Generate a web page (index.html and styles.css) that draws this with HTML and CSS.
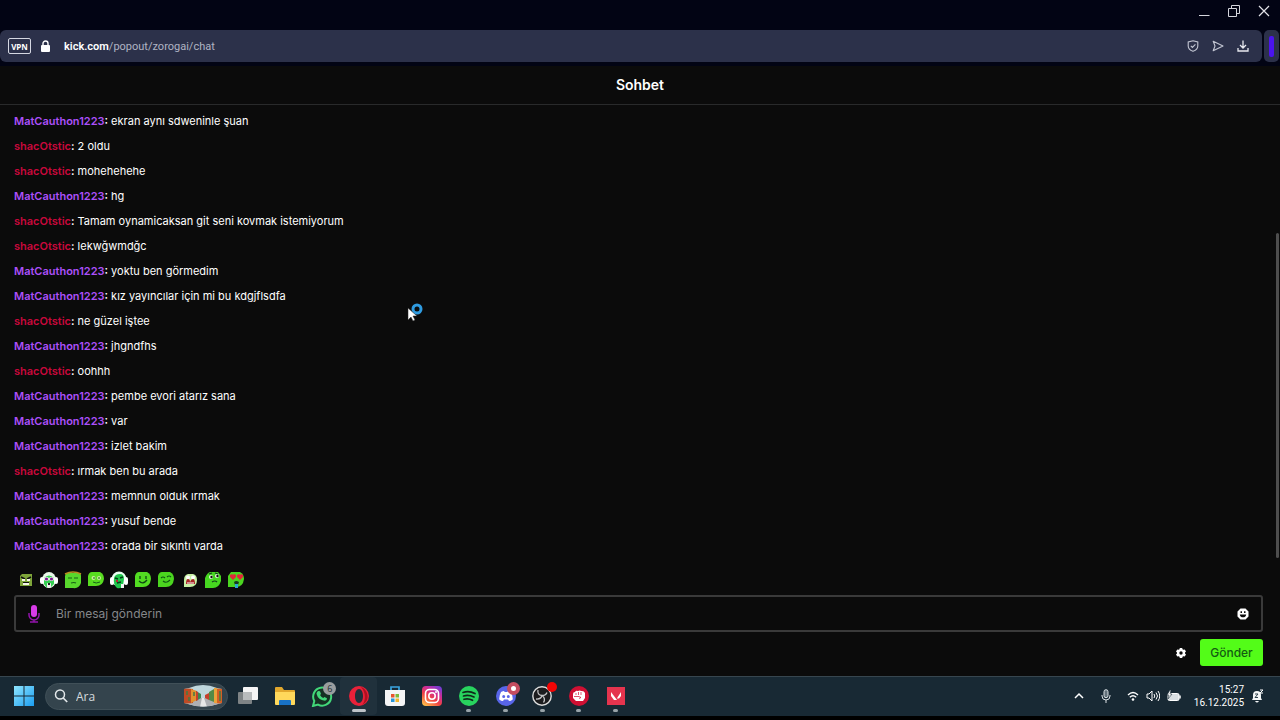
FILE: index.html
```html
<!DOCTYPE html>
<html lang="tr">
<head>
    <meta charset="UTF-8">
    <meta name="viewport" content="width=device-width, initial-scale=1.0">
    <title>Sohbet</title>
    <link rel="stylesheet" href="styles.css">
</head>
<body>
    <header class="browser">
        <div class="titlebar">
            <button class="win-btn" aria-label="Simge durumuna küçült"><svg width="12" height="12" viewBox="0 0 12 12"><path d="M1 10.500h10.500" stroke="#d5d6dd" fill="none"/></svg></button>
            <button class="win-btn" aria-label="Önceki boyut"><svg width="12" height="12" viewBox="0 0 12 12"><path d="M.5 3.500h8v8h-8zM3.500 3.500v-3h8v8h-3" stroke="#d5d6dd" fill="none"/></svg></button>
            <button class="win-btn" aria-label="Kapat"><svg width="12" height="12" viewBox="0 0 12 12"><path d="M1 1l10 10M11 1L1 11" stroke="#e2e3e8" stroke-width="1.200" fill="none"/></svg></button>
        </div>
        <div class="address-row">
            <div class="address-bar">
                <button class="vpn">VPN</button>
                <svg class="lock" width="9" height="12" viewBox="0 0 9 12"><path d="M2 6V3.500a2.500 2.500 0 0 1 5 0V6" stroke="#fff" stroke-width="1.400" fill="none"/><rect y="5" width="9" height="7" rx="1" fill="#fff"/></svg>
                <p class="url"><strong>kick.com</strong>/popout/zorogai/chat</p>
                <div class="address-tools">
                    <button aria-label="Koruma"><svg width="12" height="12" viewBox="0 0 12 12"><path d="M6 .8L10.800 2v4c0 2.500-2 4.300-4.800 5.300C3.200 10.300 1.200 8.500 1.200 6V2zM3.800 5.800l1.600 1.600 3-3" stroke="#c3c6d3" stroke-width="1.100" fill="none"/></svg></button>
                    <button aria-label="Gönder"><svg width="12" height="12" viewBox="0 0 12 12"><path d="M1.200 1.200L11 6l-9.800 4.800L3 6z" stroke="#c3c6d3" stroke-width="1.100" stroke-linejoin="round" fill="none"/></svg></button>
                    <button aria-label="İndirilenler"><svg width="12" height="12" viewBox="0 0 12 12"><path d="M6 .5v7M3 5l3 3 3-3M1 8v3h10V8" stroke="#e7e8ee" stroke-width="1.300" fill="none"/></svg></button>
                </div>
            </div>
            <div class="side-tab"><span></span></div>
        </div>
    </header>

    <main class="chat">
        <h1>Sohbet</h1>
        <section class="messages">
            <ul>
                <li><b class="purple">MatCauthon1223</b><b>:</b> ekran aynı sdweninle şuan</li>
                <li><b class="red">shacOtstic</b><b>:</b> 2 oldu</li>
                <li><b class="red">shacOtstic</b><b>:</b> mohehehehe</li>
                <li><b class="purple">MatCauthon1223</b><b>:</b> hg</li>
                <li><b class="red">shacOtstic</b><b>:</b> Tamam oynamicaksan git seni kovmak istemiyorum</li>
                <li><b class="red">shacOtstic</b><b>:</b> lekwğwmdğc</li>
                <li><b class="purple">MatCauthon1223</b><b>:</b> yoktu ben görmedim</li>
                <li><b class="purple">MatCauthon1223</b><b>:</b> kız yayıncılar için mi bu kdgjflsdfa</li>
                <li><b class="red">shacOtstic</b><b>:</b> ne güzel iştee</li>
                <li><b class="purple">MatCauthon1223</b><b>:</b> jhgndfhs</li>
                <li><b class="red">shacOtstic</b><b>:</b> oohhh</li>
                <li><b class="purple">MatCauthon1223</b><b>:</b> pembe evori atarız sana</li>
                <li><b class="purple">MatCauthon1223</b><b>:</b> var</li>
                <li><b class="purple">MatCauthon1223</b><b>:</b> izlet bakim</li>
                <li><b class="red">shacOtstic</b><b>:</b> ırmak ben bu arada</li>
                <li><b class="purple">MatCauthon1223</b><b>:</b> memnun olduk ırmak</li>
                <li><b class="purple">MatCauthon1223</b><b>:</b> yusuf bende</li>
                <li><b class="purple">MatCauthon1223</b><b>:</b> orada bir sıkıntı varda</li>
            </ul>
            <span class="scroll-thumb"></span>
        </section>

        <div class="emotes">
            <button aria-label="Kızgın"><svg viewBox="0 0 18 18"><path d="M5 3h10v12H3V5z" fill="#7fa63a"/><path d="M4 6l4 2M14 6l-4 2" stroke="#111" stroke-width="1.500"/><path d="M5 8h3v2H5zM10 8h3v2h-3zM6 12h6v2H6z" fill="#f5f5e8"/><path d="M6 11.500h6" stroke="#111"/></svg></button>
            <button aria-label="Kulaklıklı"><svg viewBox="0 0 18 18"><ellipse cx="9" cy="9" rx="7" ry="8" fill="#e9f8e9"/><rect y="6" width="4" height="7" rx="2" fill="#fff"/><rect x="14" y="6" width="4" height="7" rx="2" fill="#fff"/><path d="M4 7q5-5 10 0v6l-4 4H7l-3-4z" fill="#35cf52"/><ellipse cx="6.500" cy="8" rx="2.500" ry="2" fill="#fff"/><ellipse cx="11.500" cy="8" rx="2.500" ry="2" fill="#fff"/><circle cx="6.500" cy="8" r="1.600" fill="#7b188e"/><circle cx="11.500" cy="8" r="1.600" fill="#7b188e"/><rect x="7" y="12" width="4" height="5" rx="1" fill="#f0f0f0"/><path d="M8 12h2v2H8z" fill="#222"/></svg></button>
            <button aria-label="Uykulu"><svg viewBox="0 0 18 18"><path d="M2 2h13q2 0 2 3v7q-2 6-8 5H1V5z" fill="#58d82c"/><path d="M1 3q8-4 16 0" stroke="#b98b21" stroke-width="1.500" fill="none"/><path d="M4 7h4M10 7h4M7 12q3-1 5 0" stroke="#165f18" stroke-width="1.200" fill="none"/></svg></button>
            <button aria-label="Şaşkın"><svg viewBox="0 0 18 18"><path d="M5 1h8q4 2 4 7-1 7-8 7H1V5q1-4 4-4z" fill="#58dc20"/><circle cx="6.500" cy="7" r="2" fill="#c9f09a"/><circle cx="12" cy="7" r="2" fill="#c9f09a"/><path d="M6 7h2M11 7h2M6 11q3 2 7 0" stroke="#14601b" fill="none"/></svg></button>
            <button aria-label="Müzik"><svg viewBox="0 0 18 18"><circle cx="9" cy="8" r="7.500" fill="#e9fff0"/><rect y="6" width="4" height="8" rx="2" fill="#fff"/><rect x="14" y="6" width="4" height="8" rx="2" fill="#fff"/><path d="M4 7q1-4 6-4 4 0 4 5l-1 6q-1 4-6 3-4-3-3-10z" fill="#1fc64c"/><path d="M5 7l3 1M10 7l3-1M7 12l4-1" stroke="#083b19" stroke-width="1.400"/><path d="M6 9h2v2H6z" fill="#b52632"/><path d="M11 13h3v4h-3z" fill="#f2f2f2"/></svg></button>
            <button aria-label="Gülen"><svg viewBox="0 0 18 18"><path d="M5 1h8q4 2 4 7-1 8-8 8H1V5q1-4 4-4z" fill="#53dc22"/><path d="M6 5v3M12 5v3M5 10q4 4 8-1" stroke="#0d4714" stroke-width="1.300" fill="none"/></svg></button>
            <button aria-label="Mutlu"><svg viewBox="0 0 18 18"><path d="M5 1h8q4 2 4 7-1 8-8 8H1V5q1-4 4-4z" fill="#4bd51f"/><path d="M4 7q2-2 4 0M10 6q2-2 4 0M6 10q3 3 7-1" stroke="#0d5314" stroke-width="1.100" fill="none"/></svg></button>
            <button aria-label="Bağıran"><svg viewBox="0 0 18 18"><path d="M7 3h5q4 1 4 6 0 7-7 7H3V9q0-5 4-6z" fill="#c8f0a5"/><circle cx="7" cy="6.500" r="2" fill="#fff"/><circle cx="12" cy="6.500" r="2" fill="#fff"/><path d="M5 13q0-5 2-5t2 3q1-3 3-3t2 5z" fill="#a82424"/><path d="M6 12h7" stroke="#fff"/></svg></button>
            <button aria-label="Düşünen"><svg viewBox="0 0 18 18"><path d="M6 1h8l3 4v5q-2 7-8 7H1V7q2-5 5-6z" fill="#46d720"/><circle cx="7" cy="6" r="2" fill="#e8f9de"/><circle cx="13" cy="5" r="2" fill="#e8f9de"/><circle cx="7.500" cy="6" r="1.200" fill="#111"/><circle cx="13.500" cy="5" r="1.200" fill="#111"/><path d="M5 3l3-1M11 2l3 1M8 11q3-2 5 0" stroke="#11401b" stroke-width="1.200" fill="none"/></svg></button>
            <button aria-label="Aşık"><svg viewBox="0 0 18 18"><path d="M4 1h9q4 2 4 7-1 8-8 8H1V5z" fill="#4bd620"/><path d="M6 9L3 6V4l2-1 1 1 1-1 2 1v2zM13 9l-3-3V4l2-1 1 1 1-1 2 1v2z" fill="#e12738"/><path d="M7 11q2-2 5 0l-1 3H8z" fill="#173b22"/><path d="M8 13h3v4H8z" fill="#29a9d2"/></svg></button>
        </div>

        <form class="composer">
            <div class="message-box">
                <svg class="mic" width="12" height="18" viewBox="0 0 12 18"><rect x="3" y="0" width="6" height="12" rx="3" fill="#d83be8"/><path d="M1 8v2a5 5 0 0 0 10 0V8M6 15v2M2 17h8" stroke="#9415ad" stroke-width="1.500" fill="none"/></svg>
                <input type="text" placeholder="Bir mesaj gönderin" aria-label="Bir mesaj gönderin">
                <button type="button" aria-label="İfadeler"><svg width="12" height="12" viewBox="0 0 12 12"><path fill="#fff" fill-rule="evenodd" d="M3.500.5h5l3 3v5l-3 3h-5l-3-3v-5zM3.500 3.300V5H5V3.300zM7 3.300V5h1.500V3.300zM2.800 6.500c.3 3.800 6.100 3.800 6.400 0z"/></svg></button>
            </div>
            <div class="actions">
                <button class="settings" type="button" aria-label="Ayarlar"><svg width="10" height="10" viewBox="0 0 10 10"><path fill="#fff" fill-rule="evenodd" d="M3.800 0h2.400l.3 1.300.9.500L8.700 1.400 10 3.500 9 4.500v1l1 1-1.300 2.100-1.300-.4-.9.500L6.200 10H3.800l-.3-1.300-.9-.5-1.300.4L0 6.500l1-1v-1l-1-1 1.300-2.100 1.300.4.9-.5zM5 3.300a1.700 1.700 0 1 0 0 3.400 1.700 1.700 0 0 0 0-3.400z"/></svg></button>
                <button class="send" type="button">Gönder</button>
            </div>
        </form>
        <svg class="cursor" width="18" height="20" viewBox="0 0 18 20"><circle cx="10" cy="6" r="4" fill="none" stroke="#2f9be0" stroke-width="3"/><path d="M1 5v12l3-3 2 4 2-1-2-4h4z" fill="#fff" stroke="#222" stroke-width=".5"/></svg>
    </main>

    <footer class="taskbar">
        <button class="start" aria-label="Başlat"><svg width="20" height="20" viewBox="0 0 20 20"><defs><linearGradient id="win" x2="1" y2="1"><stop stop-color="#8fe6ff"/><stop offset="1" stop-color="#1b9df0"/></linearGradient></defs><path fill="url(#win)" d="M0 0h9.500v9.500H0zM10.500 0H20v9.500h-9.500zM0 10.500h9.500V20H0zM10.500 10.500H20V20h-9.500z"/></svg></button>
        <div class="search">
            <svg width="14" height="14" viewBox="0 0 14 14"><circle cx="6" cy="5.500" r="4.500" fill="none" stroke="#e3e8ea" stroke-width="1.500"/><path d="M9.200 9l4 4" stroke="#e3e8ea" stroke-width="1.700"/></svg>
            <input type="text" placeholder="Ara" aria-label="Ara">
            <svg width="38" height="22" viewBox="0 0 38 22"><defs><clipPath id="scene"><path d="M5 3q14-6 28 0l5 1v14l-4 1q-15 5-30 0l-4-1V4z"/></clipPath></defs><g clip-path="url(#scene)"><path fill="#bed6dc" d="M0 0h38v22H0z"/><path fill="#aeb0b4" d="M14 13h10l14 9H0z"/><path fill="#e8e8e8" d="M18 13h2l3 9h-7z"/><path fill="#bf4b25" d="M0 3l9 1v14l-9 1z"/><path fill="#e2912e" d="M7 4l6 2v9l-6 3z"/><path fill="#3f8650" d="M12 6l5 3v4l-5 3z"/><path fill="#d65e24" d="M38 3l-8 1v14l8 1z"/><path fill="#e9a33b" d="M33 3h-3v15h3z"/><path fill="#538a47" d="M30 4l-5 3v8l5 2z"/><path fill="#c63f2c" d="M25 8l-4 2v3l4 2zM12 6l2 1v8l-2 1z"/><path d="M3 6v4M5 12v4M36 6v10M10 7v4" stroke="#427b45" stroke-width="1.500"/></g></svg>
        </div>
        <nav class="apps">
            <button aria-label="Görev görünümü"><svg width="20" height="20" viewBox="0 0 20 20"><rect x="5" y="1" width="15" height="13" rx="1" fill="#f5f5f5"/><rect x="0" y="6" width="14" height="12" rx="1" fill="#7e8385"/><path d="M5 6h9v8H5z" fill="#b9bcbd"/></svg></button>
            <button aria-label="Dosya Gezgini"><svg width="22" height="20" viewBox="0 0 22 20"><path d="M1 2q0-1 1-1h6l2 3h10q1 0 1 1v13H1z" fill="#e2a82d"/><path d="M1 6h20v12q0 1-1 1H2q-1 0-1-1z" fill="#ffd85b"/><path d="M5 19v-4q0-1 1-1h10q1 0 1 1v4z" fill="#1872c6"/></svg></button>
            <button aria-label="WhatsApp"><svg width="22" height="22" viewBox="0 0 22 22"><path d="M2 21l1.300-5A9 9 0 1 1 7 19.600z" fill="#163023" stroke="#42d779" stroke-width="2"/><path d="M7 6l2 .2 1 2.700-1 1q1 2 3.200 3l1.200-1 2.600 1.300q0 2-2 2.500-7-.7-8.500-7Q5.600 7 7 6z" fill="#42d779"/></svg><span class="count">6</span></button>
            <button class="active" aria-label="Opera"><svg width="20" height="20" viewBox="0 0 20 20"><path fill="#e92139" fill-rule="evenodd" d="M10 0a10 10 0 1 0 0 20 10 10 0 0 0 0-20zm0 3c2.400 0 4 3 4 7s-1.600 7-4 7-4-3-4-7 1.600-7 4-7z"/><path d="M12 1c7 2 10 14 1 18 4-4 4-13-1-18z" fill="#ae1020"/></svg></button>
            <button aria-label="Microsoft Store"><svg width="20" height="20" viewBox="0 0 20 20"><path d="M6 5V1h8v4" fill="none" stroke="#3aa4df" stroke-width="1.700"/><path d="M0 4h20v13q0 3-3 3H3q-3 0-3-3z" fill="#f4f5f6"/><path fill="#e8552f" d="M6 8h3.500v3.500H6z"/><path fill="#7dba3a" d="M10.500 8H14v3.500h-3.500z"/><path fill="#2795d8" d="M6 12.500h3.500V16H6z"/><path fill="#f5b52c" d="M10.500 12.500H14V16h-3.500z"/></svg></button>
            <button aria-label="Instagram"><svg width="20" height="20" viewBox="0 0 20 20"><defs><linearGradient id="insta" x1=".15" y1="1" x2=".8" y2="0"><stop stop-color="#ffc14a"/><stop offset=".4" stop-color="#f04142"/><stop offset=".7" stop-color="#cc2d9b"/><stop offset="1" stop-color="#743cd3"/></linearGradient></defs><rect width="20" height="20" rx="4" fill="url(#insta)"/><rect x="3.500" y="3.500" width="13" height="13" rx="4" fill="none" stroke="#fff" stroke-width="1.600"/><circle cx="10" cy="10" r="3.200" fill="none" stroke="#fff" stroke-width="1.600"/><circle cx="14" cy="6" r="1" fill="#fff"/></svg></button>
            <button class="open" aria-label="Spotify"><svg width="20" height="20" viewBox="0 0 20 20"><circle cx="10" cy="10" r="10" fill="#28d35e"/><path d="M4 6.500q6-2 12 1M4.500 10q5-1.500 10.500 1M5 13.300q4.500-1.200 8.500 1" stroke="#10271a" stroke-width="1.700" stroke-linecap="round" fill="none"/></svg></button>
            <button class="open" aria-label="Discord"><svg width="20" height="20" viewBox="0 0 20 20"><circle cx="10" cy="10" r="10" fill="#5865e8"/><path fill="#fff" fill-rule="evenodd" d="M5 6q2-1 3-1l.7 1h2.600l.7-1q1 0 3 1 2 4 1.700 7.500Q15 15 13 15l-1-1.400H8L7 15q-2 0-3.700-1.500Q3 10 5 6zm2.700 3a1.500 1.500 0 1 0 0 3 1.500 1.500 0 0 0 0-3zm4.600 0a1.500 1.500 0 1 0 0 3 1.500 1.500 0 0 0 0-3z"/></svg><span class="live"></span></button>
            <button class="open" aria-label="OBS Studio"><svg width="20" height="20" viewBox="0 0 20 20"><circle cx="10" cy="10" r="9.200" fill="#1c1c1e" stroke="#ddd" stroke-width="1.400"/><path d="M6 4q-1 5 4 5.500 4 0 5-3M10 9.500q-1 4-6 3.500M10 9.500q4 3 1.500 7" stroke="#c4c4c6" stroke-width="1.300" fill="none"/></svg><span class="record"></span></button>
            <button class="open" aria-label="Yumruk"><svg width="20" height="20" viewBox="0 0 20 20"><circle cx="10" cy="10" r="10" fill="#cf1033"/><path d="M4 8q0-2 2-2 1-2 3-1 2-1 3 0 3-.5 4 2v5l-2 3H7l-3-3z" fill="#fff"/><path d="M7 7v2M9.500 6v3M12 6v3M5 10.500h5l2 1-2 1" stroke="#cf1033" stroke-width=".7" fill="none"/></svg></button>
            <button class="open" aria-label="Valorant"><svg width="18" height="18" viewBox="0 0 18 18"><rect width="18" height="18" fill="#e5344e"/><path d="M4 5l6 8H7L4 9zM14 5v4l-2 2.500H9.800z" fill="#fff"/></svg></button>
        </nav>
        <div class="tray">
            <button aria-label="Gizli simgeler"><svg width="10" height="10" viewBox="0 0 10 10"><path d="M1 7l4-4 4 4" stroke="#fff" stroke-width="1.500" fill="none"/></svg></button>
            <button class="tray-mic" aria-label="Mikrofon"><svg width="10" height="14" viewBox="0 0 10 14"><rect x="3" y=".7" width="4" height="8" rx="2" fill="#62717a" stroke="#d9dfe2"/><path d="M1 6v1a4 4 0 0 0 8 0V6M5 11v3" stroke="#d9dfe2" fill="none"/></svg></button>
            <button class="system" aria-label="Ağ, ses ve pil">
                <svg width="12" height="12" viewBox="0 0 12 12"><path d="M1 5q5-5 10 0M2.800 7.200q3.200-3 6.400 0" stroke="#fff" stroke-width="1.300" fill="none"/><circle cx="6" cy="9.500" r="1.300" fill="#fff"/></svg>
                <svg width="14" height="12" viewBox="0 0 14 12"><path d="M1 4v4h2l3 3V1L3 4z" fill="none" stroke="#fff"/><path d="M8 4q1.500 2 0 4M10 2.500q3 3.500 0 7M12 1q3.500 5 0 10" stroke="#fff" fill="none"/></svg>
                <svg width="14" height="12" viewBox="0 0 14 12"><rect x="1" y="3.500" width="11" height="7" rx="1.500" fill="#d9dfe2" stroke="#fff"/><path d="M13 5.500v3" stroke="#fff" stroke-width="1.500"/><path d="M3 0L0 5h2L1 9l4-5H3l1-4z" fill="#fff" stroke="#1b2d38" stroke-width=".6"/></svg>
            </button>
            <time datetime="2025-12-16T15:27">15:27<br>16.12.2025</time>
            <button class="bell" aria-label="Bildirimler"><svg width="13" height="14" viewBox="0 0 13 14"><path d="M1 11l1-2V6q0-4 4-4t4 4v3l1 2zM4 12h4q-2 3-4 0z" fill="#f4f6f7"/><path d="M4 5h3L4 8.500h3" stroke="#30434d" fill="none"/><path d="M9 1h3L9 4h3" stroke="#fff" fill="none"/></svg></button>
        </div>
    </footer>
</body>
</html>
```
FILE: styles.css
```css
* {
    box-sizing: border-box;
}

body {
    display: flex;
    flex-direction: column;
    height: 100vh;
    margin: 0;
    overflow: hidden;
    background: #000;
    color: #fff;
    font-family: Inter, sans-serif;
    font-size: 11px;
}

button {
    display: flex;
    align-items: center;
    justify-content: center;
    padding: 0;
    border: none;
    background: none;
    color: inherit;
    font-family: inherit;
    cursor: pointer;
}

input {
    flex: 1;
    min-width: 0;
    padding: 0;
    border: none;
    outline: none;
    background: none;
    color: #fff;
    font-family: inherit;
}

svg {
    display: block;
    flex-shrink: 0;
}

.browser {
    padding-bottom: 4px;
    background: #020414;
}

.titlebar {
    display: flex;
    justify-content: flex-end;
    height: 30px;
    padding: 0 10px 8px 0;
    gap: 18px;
}

.address-row {
    display: flex;
    gap: 2px;
    height: 32px;
    padding-right: 1px;
}

.address-bar {
    display: flex;
    flex: 1;
    align-items: center;
    padding: 0 13px 0 8px;
    border-radius: 6px;
    background: #2c314a;
    font-family: Roboto, sans-serif;
}

.vpn {
    width: 23px;
    height: 16px;
    border: 1px solid #d5d8e2;
    border-radius: 2px;
    font-family: "Open Sans", sans-serif;
    font-size: 8px;
    font-weight: 700;
}

.lock {
    margin: 0 14px 0 10px;
}

.url {
    flex: 1;
    margin: 0;
    color: #b0b4c3;
}

.url strong {
    color: #fff;
    font-weight: 600;
}

.address-tools {
    display: flex;
    gap: 13px;
}

.side-tab {
    display: flex;
    align-items: center;
    justify-content: center;
    width: 15px;
    border-radius: 5px;
    background: #2c314a;
}

.side-tab span {
    width: 5px;
    height: 21px;
    border-radius: 2px;
    background: #4b14ee;
}

.chat {
    position: relative;
    display: flex;
    flex: 1;
    flex-direction: column;
    min-height: 0;
    background: #0b0b0b;
}

.chat h1 {
    margin: 0;
    border-bottom: 1px solid #292a2b;
    font-size: 14px;
    font-weight: 600;
    line-height: 38px;
    text-align: center;
}

.messages {
    position: relative;
    flex: 1;
    min-height: 0;
}

.messages ul {
    height: 100%;
    margin: 0;
    padding: 4px 14px 0;
    overflow: hidden;
    list-style: none;
}

.messages li {
    line-height: 25px;
}

.messages b {
    font-weight: 600;
}

.messages .purple {
    color: #ad50fb;
}

.messages .red {
    color: #c9083c;
}

.scroll-thumb {
    position: absolute;
    top: 28%;
    right: 1px;
    bottom: 3px;
    width: 3px;
    border-radius: 2px;
    background: #4e4e4e;
}

.emotes {
    display: flex;
    width: 234px;
    height: 34px;
    margin-left: 14px;
    padding-top: 3px;
}

.emotes button {
    flex: 1;
}

.emotes svg {
    width: 18px;
    height: 18px;
}

.composer {
    padding: 0 17px 10px 14px;
}

.message-box {
    display: flex;
    align-items: center;
    height: 37px;
    padding: 0 12px;
    border: 2px solid #3a3a3a;
    border-radius: 3px;
}

.message-box input {
    margin-left: 16px;
    font-size: 12px;
}

.message-box input::placeholder {
    color: #85878a;
    opacity: 1;
}

.actions {
    display: flex;
    justify-content: flex-end;
    gap: 14px;
    margin-top: 7px;
}

.send {
    width: 63px;
    height: 27px;
    border-radius: 3px;
    background: #53fc18;
    color: #135b12;
    font-size: 12px;
    font-weight: 500;
}

.cursor {
    position: absolute;
    top: 237px;
    left: 407px;
    pointer-events: none;
}

.taskbar {
    display: flex;
    align-items: center;
    height: 40px;
    margin-bottom: 4px;
    padding: 0 16px 1px 14px;
    border-top: 1px solid #37464f;
    background: #182934;
    font-family: "Open Sans", sans-serif;
}

.search {
    display: flex;
    align-items: center;
    width: 183px;
    height: 27px;
    margin: 0 2px 0 11px;
    padding: 0 5px 0 8px;
    gap: 8px;
    border: 1px solid #405058;
    border-radius: 14px;
    background: #34444d;
}

.search input {
    font-size: 12px;
}

.search input::placeholder {
    color: #d4dadd;
    opacity: 1;
}

.apps {
    display: flex;
    width: 404px;
    height: 100%;
}

.apps button {
    position: relative;
    flex: 1;
}

.apps .active {
    border-radius: 4px;
    background: #20313c;
}

.apps .active::after,
.apps .open::after {
    content: "";
    position: absolute;
    bottom: 3px;
    width: 5px;
    height: 3px;
    border-radius: 2px;
    background: #98a3a9;
}

.apps .active::after {
    width: 14px;
    background: #bdc3c8;
}

.count,
.live,
.record {
    position: absolute;
    top: 5px;
    right: 4px;
    width: 13px;
    height: 13px;
    border-radius: 50%;
}

.count {
    background: #999d9f;
    color: #242d31;
    font-size: 9px;
    line-height: 13px;
}

.live {
    border: 4px solid #c54d60;
    background: #fff;
}

.record {
    width: 10px;
    height: 10px;
    background: #f20505;
}

.tray {
    display: flex;
    align-items: center;
    margin-left: auto;
}

.tray-mic {
    margin: 0 16px 0 17px;
}

.system {
    gap: 7px;
}

.tray time {
    margin: 0 7px 0 13px;
    font-family: Roboto, sans-serif;
    font-size: 10px;
    line-height: 13px;
    text-align: right;
}
```
